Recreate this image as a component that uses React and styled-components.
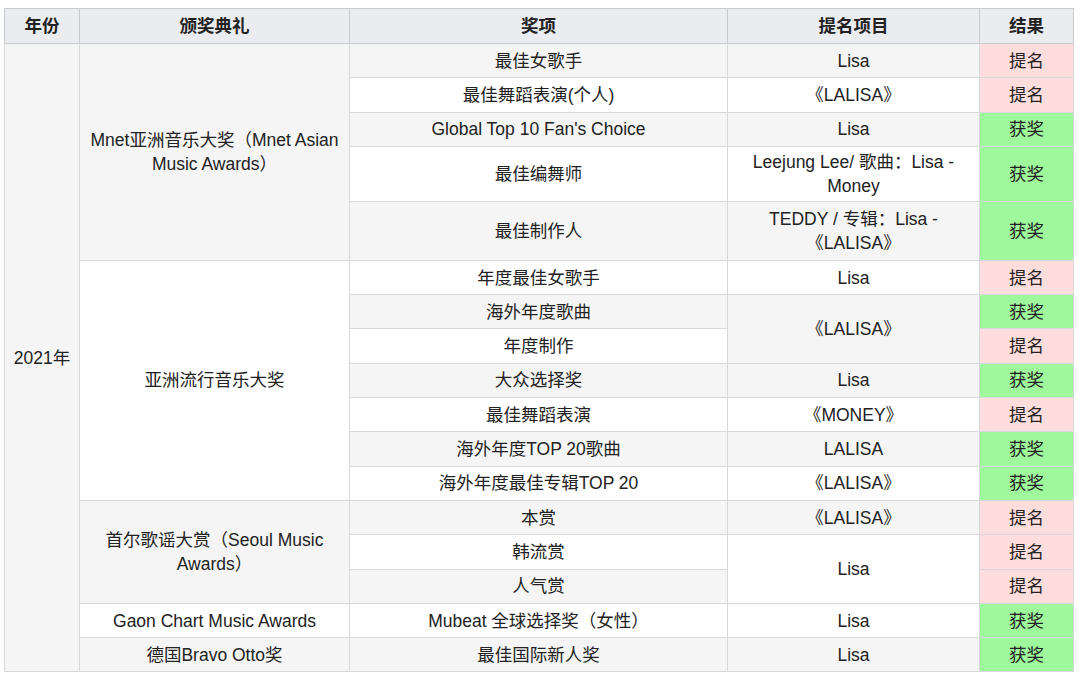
import styled, { createGlobalStyle } from 'styled-components';

const GlobalStyle = createGlobalStyle`
  html, body {
    margin: 0;
    padding: 0;
    background: #ffffff;
  }
  body {
    font-family: "Liberation Sans", Arial, "Noto Sans CJK SC", sans-serif;
    color: #222222;
  }
`;

const NOM = '提名';
const WIN = '获奖';

// each row: award, result, plus optional spanning cells that start on it
const rows = [
  { ceremony: { text: ['Mnet亚洲音乐大奖（Mnet Asian', 'Music Awards）'], span: 5 }, award: '最佳女歌手', nominee: { text: ['Lisa'] }, result: NOM },
  { award: '最佳舞蹈表演(个人)', nominee: { text: ['《LALISA》'] }, result: NOM },
  { award: "Global Top 10 Fan's Choice", nominee: { text: ['Lisa'] }, result: WIN },
  { award: '最佳编舞师', nominee: { text: ['Leejung Lee/ 歌曲：Lisa -', 'Money'] }, result: WIN, h: 55 },
  { award: '最佳制作人', nominee: { text: ['TEDDY / 专辑：Lisa -', '《LALISA》'] }, result: WIN, h: 59 },
  { ceremony: { text: ['亚洲流行音乐大奖'], span: 7 }, award: '年度最佳女歌手', nominee: { text: ['Lisa'] }, result: NOM },
  { award: '海外年度歌曲', nominee: { text: ['《LALISA》'], span: 2 }, result: WIN },
  { award: '年度制作', result: NOM },
  { award: '大众选择奖', nominee: { text: ['Lisa'] }, result: WIN },
  { award: '最佳舞蹈表演', nominee: { text: ['《MONEY》'] }, result: NOM },
  { award: '海外年度TOP 20歌曲', nominee: { text: ['LALISA'] }, result: WIN },
  { award: '海外年度最佳专辑TOP 20', nominee: { text: ['《LALISA》'] }, result: WIN },
  { ceremony: { text: ['首尔歌谣大赏（Seoul Music', 'Awards）'], span: 3 }, award: '本赏', nominee: { text: ['《LALISA》'] }, result: NOM },
  { award: '韩流赏', nominee: { text: ['Lisa'], span: 2 }, result: NOM },
  { award: '人气赏', result: NOM },
  { ceremony: { text: ['Gaon Chart Music Awards'] }, award: 'Mubeat 全球选择奖（女性）', nominee: { text: ['Lisa'] }, result: WIN },
  { ceremony: { text: ['德国Bravo Otto奖'] }, award: '最佳国际新人奖', nominee: { text: ['Lisa'] }, result: WIN },
];

function Lines({ text }) {
  return text.map((line) => <Line key={line}>{line}</Line>);
}

function App() {
  return (
    <Page>
      <GlobalStyle />
      <Table>
        <colgroup>
          <col style={{ width: 75 }} />
          <col style={{ width: 270 }} />
          <col style={{ width: 378 }} />
          <col style={{ width: 252 }} />
          <col style={{ width: 94 }} />
        </colgroup>
        <thead>
          <tr>
            <HeadCell>年份</HeadCell>
            <HeadCell>颁奖典礼</HeadCell>
            <HeadCell>奖项</HeadCell>
            <HeadCell>提名项目</HeadCell>
            <HeadCell>结果</HeadCell>
          </tr>
        </thead>
        <tbody>
          {rows.map((row, i) => {
            const gray = i % 2 === 0;
            return (
              <Row key={row.award} $h={row.h}>
                {i === 0 && (
                  <Cell rowSpan={rows.length} $gray={gray}>2021年</Cell>
                )}
                {row.ceremony && (
                  <Cell rowSpan={row.ceremony.span || 1} $gray={gray}>
                    <Lines text={row.ceremony.text} />
                  </Cell>
                )}
                <Cell $gray={gray}>{row.award}</Cell>
                {row.nominee && (
                  <Cell rowSpan={row.nominee.span || 1} $gray={gray}>
                    <Lines text={row.nominee.text} />
                  </Cell>
                )}
                <ResultCell $won={row.result === WIN}>{row.result}</ResultCell>
              </Row>
            );
          })}
        </tbody>
      </Table>
    </Page>
  );
}

export default App;

const Page = styled.div`
  width: 1080px;
  height: 679px;
  overflow: hidden;
  padding: 8px 0 0 4px;
  box-sizing: border-box;
  background: #ffffff;
`;

const Table = styled.table`
  width: 1070px;
  table-layout: fixed;
  border-collapse: collapse;
  font-size: 17.5px;
  line-height: 24px;
  border: 1px solid #c8ccd1;
`;

const HeadCell = styled.th`
  height: 34px;
  padding: 0 4px;
  background: #eaecf0;
  border: 1px solid #c8ccd1;
  font-weight: 700;
  text-align: center;
  color: #222222;
`;

const Row = styled.tr`
  height: ${(p) => p.$h || 34.3}px;
`;

const Cell = styled.td`
  padding: 0 4px;
  border: 1px solid #d6d8db;
  text-align: center;
  vertical-align: middle;
  white-space: nowrap;
  background: ${(p) => (p.$gray ? '#f5f5f5' : '#ffffff')};
`;

const Line = styled.div`
  white-space: nowrap;
`;

const ResultCell = styled.td`
  padding: 0 4px;
  border: 1px solid #d6d8db;
  text-align: center;
  vertical-align: middle;
  background: ${(p) => (p.$won ? '#9ff99c' : '#ffdddd')};
  color: #222222;
`;
